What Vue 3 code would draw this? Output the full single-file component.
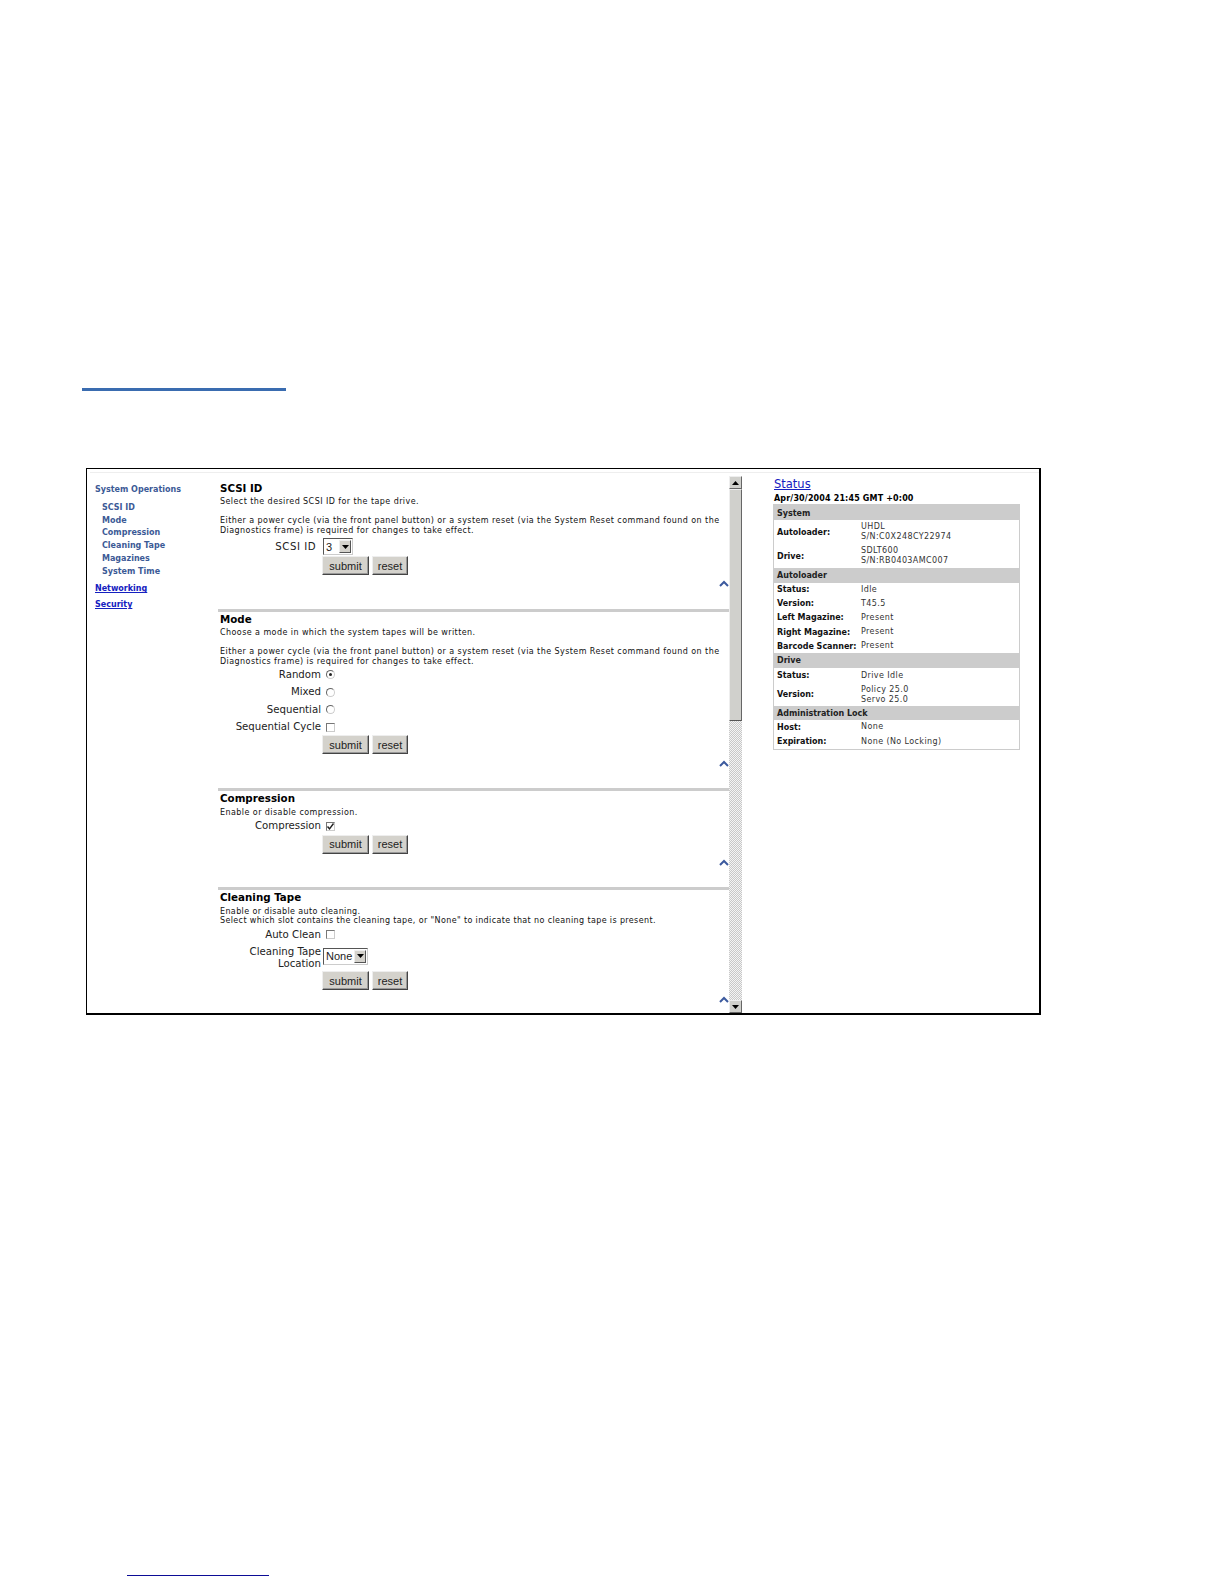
<script setup>
const navSub = ['SCSI ID', 'Mode', 'Compression', 'Cleaning Tape', 'Magazines', 'System Time']
const status = [
  { h: 'System' },
  { l: 'Autoloader:', v: ['UHDL', 'S/N:C0X248CY22974'], c: 'r24' },
  { l: 'Drive:', v: ['SDLT600', 'S/N:RB0403AMC007'], c: 'r24' },
  { h: 'Autoloader' },
  { l: 'Status:', v: ['Idle'], c: 'r14' },
  { l: 'Version:', v: ['T45.5'], c: 'r14' },
  { l: 'Left Magazine:', v: ['Present'], c: 'r15' },
  { l: 'Right Magazine:', v: ['Present'], c: 'r14' },
  { l: 'Barcode Scanner:', v: ['Present'], c: 'r14' },
  { h: 'Drive' },
  { l: 'Status:', v: ['Drive Idle'], c: 'r16' },
  { l: 'Version:', v: ['Policy 25.0', 'Servo 25.0'], c: 'r22' },
  { h: 'Administration Lock' },
  { l: 'Host:', v: ['None'], c: 'r15' },
  { l: 'Expiration:', v: ['None (No Locking)'], c: 'r14' }
]
</script>

<template>
  <div class="page">
    <div class="topbar"></div>
    <div class="frame">
      <nav class="nav">
        <div class="nav-title">System Operations</div>
        <a v-for="n in navSub" :key="n" class="nav-sub">{{ n }}</a>
        <a class="nav-link first">Networking</a>
        <a class="nav-link second">Security</a>
      </nav>

      <main class="main">
        <section class="sec s1">
          <h2>SCSI ID</h2>
          <p class="p1">Select the desired SCSI ID for the tape drive.</p>
          <p class="p2">Either a power cycle (via the front panel button) or a system reset (via the System Reset command found on the<br />Diagnostics frame) is required for changes to take effect.</p>
          <div class="row r17 mt2">
            <label class="lab short">SCSI ID</label>
            <div class="sel w30"><span>3</span><i class="drop"><svg viewBox="0 0 7 4" width="7" height="4"><path d="M0 0h7L3.5 4z" fill="#000" /></svg></i></div>
          </div>
          <div class="btns mt1"><button>submit</button><button class="rs">reset</button></div>
          <svg class="up c1" viewBox="0 0 10 7" width="10" height="7"><path d="M1 6l4-4 4 4" fill="none" stroke="#3c5a9e" stroke-width="2" /></svg>
        </section>

        <section class="sec s2">
          <h2>Mode</h2>
          <p class="p1">Choose a mode in which the system tapes will be written.</p>
          <p class="p2">Either a power cycle (via the front panel button) or a system reset (via the System Reset command found on the<br />Diagnostics frame) is required for changes to take effect.</p>
          <div class="row r175 pull"><label class="lab">Random</label><span class="radio on"></span></div>
          <div class="row r175"><label class="lab">Mixed</label><span class="radio"></span></div>
          <div class="row r175"><label class="lab">Sequential</label><span class="radio"></span></div>
          <div class="row r175"><label class="lab">Sequential Cycle</label><span class="check"></span></div>
          <div class="btns"><button>submit</button><button class="rs">reset</button></div>
          <svg class="up c2" viewBox="0 0 10 7" width="10" height="7"><path d="M1 6l4-4 4 4" fill="none" stroke="#3c5a9e" stroke-width="2" /></svg>
        </section>

        <section class="sec s3">
          <h2>Compression</h2>
          <p class="p1 lower">Enable or disable compression.</p>
          <div class="row r17">
            <label class="lab">Compression</label>
            <span class="check"><svg viewBox="0 0 9 9" width="9" height="9"><path d="M1.5 4.5l2 2.3 4-5.3" fill="none" stroke="#222" stroke-width="1.4" /></svg></span>
          </div>
          <div class="btns"><button>submit</button><button class="rs">reset</button></div>
          <svg class="up c2" viewBox="0 0 10 7" width="10" height="7"><path d="M1 6l4-4 4 4" fill="none" stroke="#3c5a9e" stroke-width="2" /></svg>
        </section>

        <section class="sec s4">
          <h2>Cleaning Tape</h2>
          <p class="tight">Enable or disable auto cleaning.<br />Select which slot contains the cleaning tape, or "None" to indicate that no cleaning tape is present.</p>
          <div class="row r17 mt1"><label class="lab">Auto Clean</label><span class="check"></span></div>
          <div class="row r24 mt3">
            <label class="lab two">Cleaning Tape<br />Location</label>
            <div class="sel w45 raised"><span>None</span><i class="drop"><svg viewBox="0 0 7 4" width="7" height="4"><path d="M0 0h7L3.5 4z" fill="#000" /></svg></i></div>
          </div>
          <div class="btns mt1"><button>submit</button><button class="rs">reset</button></div>
          <svg class="up c2" viewBox="0 0 10 7" width="10" height="7"><path d="M1 6l4-4 4 4" fill="none" stroke="#3c5a9e" stroke-width="2" /></svg>
        </section>
      </main>

      <div class="sb">
        <div class="sb-btn"><svg viewBox="0 0 7 4" width="7" height="4"><path d="M0 4h7L3.5 0z" fill="#000" /></svg></div>
        <div class="sb-thumb"></div>
        <div class="sb-track"></div>
        <div class="sb-btn"><svg viewBox="0 0 7 4" width="7" height="4"><path d="M0 0h7L3.5 4z" fill="#000" /></svg></div>
      </div>

      <aside class="status">
        <a class="st-title">Status</a>
        <div class="st-date">Apr/30/2004 21:45 GMT +0:00</div>
        <div class="table">
          <template v-for="(r, i) in status" :key="i">
            <div v-if="r.h" class="t-head">{{ r.h }}</div>
            <div v-else class="t-row" :class="r.c">
              <b>{{ r.l }}</b>
              <div class="t-val"><div v-for="x in r.v" :key="x">{{ x }}</div></div>
            </div>
          </template>
        </div>
      </aside>
    </div>
    <div class="foot"></div>
  </div>
</template>

<style scoped>
.page { width: 1224px; height: 1584px; overflow: hidden; background: #fff; font-family: "DejaVu Sans", Verdana, sans-serif; color: #111; padding-top: 388px; box-sizing: border-box; }
.topbar { width: 204px; height: 3px; margin-left: 82px; background: #3a6cb0; }
.frame { display: flex; box-sizing: border-box; width: 955px; height: 547px; margin: 77px 0 0 86px; border: solid #000; border-width: 1px 2px 2px 1px; background: linear-gradient(#eee, #eee) 3px 3px / 100% 1px no-repeat #fff; }
.foot { width: 142px; height: 1px; margin: 560px 0 0 127px; background: #0c0c96; }

.nav { width: 131px; flex: none; box-sizing: border-box; padding: 15px 0 0 8px; font-size: 8px; font-weight: 700; color: #3c5a96; }
.nav-title { line-height: 12px; margin-bottom: 6px; }
.nav-sub { display: block; margin-left: 7px; line-height: 12.7px; }
.nav-link { display: block; line-height: 12px; color: #1420c0; text-decoration: underline; }
.nav-link.first { margin-top: 5px; }
.nav-link.second { margin-top: 4px; }

.main { width: 511px; flex: none; font-size: 8px; }
.sec { position: relative; box-sizing: border-box; padding-left: 2px; border-top: 3px solid #ccc; }
.s1 { height: 140px; border-top: 0; padding-top: 13px; }
.s2 { height: 179px; padding-top: 1px; }
.s3 { height: 99px; padding-top: 1px; }
.s4 { height: 123px; padding-top: 1px; }
h2 { margin: 0; font-size: 10.3px; line-height: 12px; font-weight: 700; color: #000; }
p { margin: 0; line-height: 10px; white-space: nowrap; letter-spacing: 0.43px; }
.p1 { margin-top: 3px; }
.p2 { margin-top: 9px; }
.lower { margin-top: 3.5px; }
.tight { margin-top: 4px; line-height: 9px; letter-spacing: 0.37px; }
.row { display: flex; align-items: center; }
.pull { margin-top: -1px; }
.r17 { height: 17px; }
.r175 { height: 17.5px; }
.mt1 { margin-top: 1px; }
.mt2 { margin-top: 2px; }
.mt3 { margin-top: 3px; }
.lab { width: 101px; flex: none; box-sizing: border-box; text-align: right; font-size: 10.2px; line-height: 12px; color: #222; white-space: nowrap; }
.lab.short { padding-right: 5px; letter-spacing: 0.5px; }
.lab.two { align-self: flex-start; }
.radio, .check { display: block; flex: none; box-sizing: border-box; width: 9px; height: 9px; margin-left: 5px; background: #fff; }
.radio { border-radius: 50%; border: 1px solid #666; border-right-color: #ccc; border-bottom-color: #ccc; position: relative; }
.radio.on::after { content: ""; position: absolute; left: 2px; top: 2px; width: 3px; height: 3px; border-radius: 50%; background: #222; }
.check { border: 1px solid #777; border-right-color: #ccc; border-bottom-color: #ccc; position: relative; }
.check svg { position: absolute; left: -1px; top: -1px; }
.sel { display: flex; align-items: center; justify-content: space-between; box-sizing: border-box; height: 17px; margin-left: 2px; border: 1px solid #555; border-right-color: #ccc; border-bottom-color: #ccc; padding: 0 1px 0 2px; font-family: "Liberation Sans", Arial, sans-serif; font-size: 11px; color: #222; }
.raised { margin-top: -4px; }
.w30 { width: 30px; }
.w45 { width: 45px; }
.drop { display: flex; align-items: center; justify-content: center; width: 12px; height: 13px; background: #d4d2cc; border: 1px solid; border-color: #eee #555 #555 #eee; box-sizing: border-box; }
.btns { display: flex; gap: 3px; padding-left: 102px; }
.s2 .btns { margin-top: -1px; }
.r24 { height: 24px; }
button { width: 47px; height: 19px; padding: 0; box-sizing: border-box; background: #d4d2cc; border: 1px solid; border-color: #eee #444 #444 #eee; box-shadow: inset -1px -1px #999; font-family: "Liberation Sans", Arial, sans-serif; font-size: 11px; color: #222; }
button.rs { width: 36px; }
.up { display: block; position: absolute; right: 0; }
.c1 { top: 111px; }
.s2 .c2 { bottom: 21px; }
.s3 .c2 { bottom: 21px; }
.s4 .c2 { bottom: 7px; }

.sb { width: 13px; flex: none; display: flex; flex-direction: column; margin-top: 7px; }
.sb-btn { height: 13px; flex: none; display: flex; align-items: center; justify-content: center; box-sizing: border-box; background: #d0d0cc; border: 1px solid; border-color: #eee #666 #666 #eee; }
.sb-thumb { height: 232px; flex: none; box-sizing: border-box; background: #d0d0cc; border: 1px solid; border-color: #eee #666 #555 #eee; }
.sb-track { flex: 1; background: repeating-conic-gradient(#c8c8c8 0 25%, #f4f4f4 0 50%) 0 0 / 2px 2px; }

.status { flex: none; width: 280px; box-sizing: border-box; padding: 9px 0 0 31px; font-size: 8px; }
.st-title { display: block; margin-left: 1px; font-size: 11.5px; line-height: 12px; color: #1420c0; text-decoration: underline; }
.st-date { margin-left: 1px; line-height: 10px; margin-top: 4px; margin-bottom: 0; font-weight: 700; color: #000; letter-spacing: 0.15px; }
.table { width: 247px; box-sizing: border-box; border: 1px solid #ccc; border-top: 0; }
.t-head { height: 14.5px; line-height: 16.5px; padding-left: 3px; background: #ccc; font-weight: 700; color: #222; }
.t-head:first-child { height: 16px; line-height: 19px; }
.t-row { display: flex; align-items: center; padding-left: 3px; color: #333; }
.t-row b { width: 84px; flex: none; white-space: nowrap; color: #111; }
.t-val { line-height: 10px; white-space: nowrap; letter-spacing: 0.4px; }
.r14 { height: 14px; }
.r15 { height: 14.5px; }
.r16 { height: 16px; }
.r22 { height: 22px; }
</style>
